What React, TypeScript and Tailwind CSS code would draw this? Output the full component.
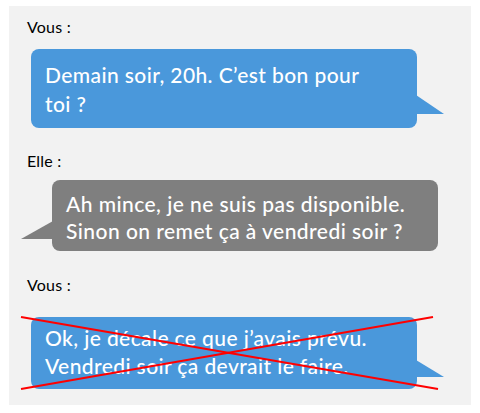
import React from "react";

const font = { fontFamily: "Lato, 'Liberation Sans', sans-serif" };

export default function App() {
  return (
    <div className="bg-white w-[480px] h-[413px] pt-[6px] pl-[9px]" style={font}>
      <div className="w-[462px] h-[399px] bg-[#f2f2f2] pt-[12px] pl-[18px] flex flex-col">
        <div className="text-[16px] leading-[18px] tracking-[0.2px] text-black">Vous :</div>
        <div className="relative mt-[13px] ml-[4px] w-[386px] h-[79px] rounded-[8px] bg-[#4a98db] text-white text-[21px] leading-[29px] tracking-[0.4px] font-medium pt-[11px] pl-[14px]">
          Demain soir, 20h. C’est bon pour
          <br />
          toi ?
          <svg className="absolute left-[385px] top-[46px]" width="28" height="19" viewBox="0 0 28 19">
            <polygon points="0,0 28,19 0,19" fill="#4a98db" />
          </svg>
        </div>

        <div className="mt-[24px] text-[16px] leading-[18px] tracking-[0.2px] text-black">Elle :</div>
        <div className="relative mt-[10px] ml-[25px] w-[386px] h-[71px] rounded-[8px] bg-[#7f7f7f] text-white text-[21px] leading-[27px] tracking-[0.45px] font-medium pt-[10px] pl-[14px]">
          Ah mince, je ne suis pas disponible.
          <br />
          Sinon on remet ça à vendredi soir ?
          <svg className="absolute left-[-31px] top-[41px]" width="32" height="18" viewBox="0 0 32 18">
            <polygon points="32,0 0,18 32,18" fill="#7f7f7f" />
          </svg>
        </div>

        <div className="mt-[25px] text-[16px] leading-[18px] tracking-[0.2px] text-black">Vous :</div>
        <div className="relative mt-[23px] ml-[4px] w-[386px] h-[72px] rounded-[8px] bg-[#4a98db] text-white text-[21px] leading-[28px] tracking-[0.4px] font-medium pt-[7px] pl-[14px]">
          Ok, je décale ce que j’avais prévu.
          <br />
          Vendredi soir ça devrait le faire.
          <svg className="absolute left-[385px] top-[43px]" width="28" height="17" viewBox="0 0 28 17">
            <polygon points="0,0 28,17 0,17" fill="#4a98db" />
          </svg>
          <svg className="absolute left-[-10px] top-0 overflow-visible" width="418" height="72" viewBox="0 0 418 72">
            <line x1="0" y1="0" x2="417" y2="72" stroke="#ff0000" strokeWidth="2" />
            <line x1="0" y1="72" x2="412" y2="0" stroke="#ff0000" strokeWidth="2" />
          </svg>
        </div>
      </div>
    </div>
  );
}
